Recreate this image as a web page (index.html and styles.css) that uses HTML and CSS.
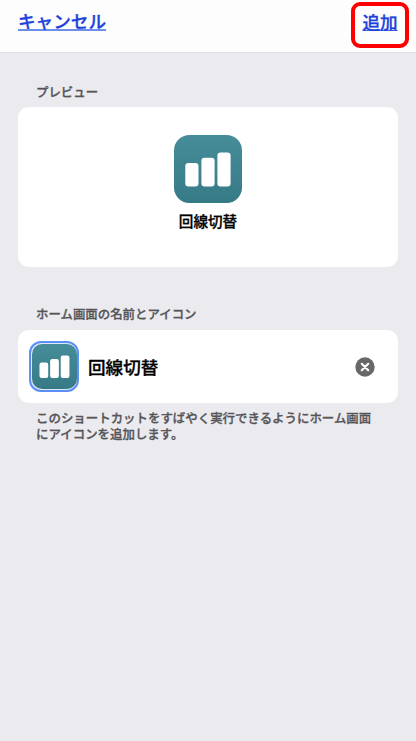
FILE: index.html
```html
<!DOCTYPE html>
<html lang="ja">
<head>
<meta charset="utf-8">
<meta name="viewport" content="width=device-width, initial-scale=1">
<title>ホーム画面に追加</title>
<link rel="stylesheet" href="styles.css">
</head>
<body>
<svg class="defs" aria-hidden="true">
  <defs>
    <linearGradient id="teal" x1="0" y1="0" x2="0" y2="1">
      <stop offset="0" stop-color="#468d99"/>
      <stop offset="1" stop-color="#367a86"/>
    </linearGradient>
    <symbol id="bars" viewBox="0 0 68 68">
      <rect width="68" height="68" rx="15.5" fill="url(#teal)"/>
      <g fill="#fff">
        <rect x="11.3" y="28" width="13.2" height="23.5" rx="3.2"/>
        <rect x="27.4" y="22.8" width="13.2" height="28.7" rx="3.2"/>
        <rect x="43.4" y="17.4" width="13.2" height="34.1" rx="3.2"/>
      </g>
    </symbol>
  </defs>
</svg>
<header class="navbar">
  <a class="link" href="#">キャンセル</a>
  <div class="marked"><a class="link link-add" href="#">追加</a></div>
</header>
<main class="content">
  <h2 class="label">プレビュー</h2>
  <section class="card preview">
    <svg class="app-icon"><use href="#bars"/></svg>
    <span class="app-name">回線切替</span>
  </section>
  <h2 class="label label-name">ホーム画面の名前とアイコン</h2>
  <section class="card name-row">
    <div class="ring"><svg class="small-icon"><use href="#bars"/></svg></div>
    <span class="name">回線切替</span>
    <svg class="clear" viewBox="0 0 20 20">
      <circle cx="10" cy="10" r="9.7" fill="#68686b"/>
      <path d="M6.8 6.8l6.4 6.4M13.2 6.8l-6.4 6.4" stroke="#fff" stroke-width="2.2" stroke-linecap="round"/>
    </svg>
  </section>
  <p class="note">このショートカットをすばやく実行できるようにホーム画面<br>にアイコンを追加します。</p>
</main>
</body>
</html>
```
FILE: styles.css
```css
* { box-sizing: border-box; }
body {
  margin: 0;
  min-height: 741px;
  background: #ebeaef;
  color: #000;
  font-family: "Noto Sans CJK JP", sans-serif;
  -webkit-text-stroke: 0.3px currentColor;
}
.defs { display: block; width: 0; height: 0; }
.navbar {
  display: flex;
  justify-content: space-between;
  align-items: flex-start;
  height: 53px;
  padding: 2px 7px 0 18px;
  background: #fdfdfd;
  border-bottom: 1px solid #e0e0e3;
}
.link {
  font-size: 17.6px;
  line-height: 20px;
  font-weight: 500;
  color: #1c41dc;
  text-decoration: underline;
  text-decoration-color: #6d8eea;
  text-decoration-thickness: 2px;
  text-underline-offset: 1px;
  text-decoration-skip-ink: none;
}
.link-add {
  text-decoration-color: #3f62e0;
  text-decoration-thickness: 1px;
}
.navbar > .link { margin-top: 9px; }
.marked {
  display: flex;
  justify-content: center;
  width: 58px;
  height: 46px;
  padding-top: 6px;
  border: 4px solid #fe0000;
  border-radius: 9px;
}
.content { padding: 0 18px; }
.label {
  margin: 0;
  padding: 31px 18px 0;
  height: 54px;
  font-size: 12.43px;
  line-height: 17px;
  font-weight: 500;
  color: #555558;
}
.label-name { height: 63px; padding-top: 39px; }
.card {
  background: #fff;
  border-radius: 11px;
}
.preview {
  display: flex;
  flex-direction: column;
  align-items: center;
  height: 160px;
  padding-top: 28px;
}
.app-icon { width: 68px; height: 68px; }
.app-name {
  margin-top: 8px;
  font-size: 14.6px;
  line-height: 20px;
  font-weight: 500;
}
.name-row {
  display: flex;
  align-items: center;
  height: 73px;
  padding: 0 23px 0 11px;
}
.ring {
  display: flex;
  align-items: center;
  justify-content: center;
  width: 50px;
  height: 51px;
  border: 2px solid #5b8ff7;
  border-radius: 12px;
  background: #dbe8fb;
}
.small-icon { width: 45px; height: 45px; flex: none; }
.name {
  flex: 1;
  margin-left: 9px;
  font-size: 17.6px;
  line-height: 24px;
  font-weight: 500;
}
.clear { width: 20px; height: 20px; }
.note {
  margin: 7px 0 0;
  padding-left: 18px;
  font-size: 12.45px;
  line-height: 16px;
  font-weight: 500;
  color: #555558;
  white-space: nowrap;
}
```
